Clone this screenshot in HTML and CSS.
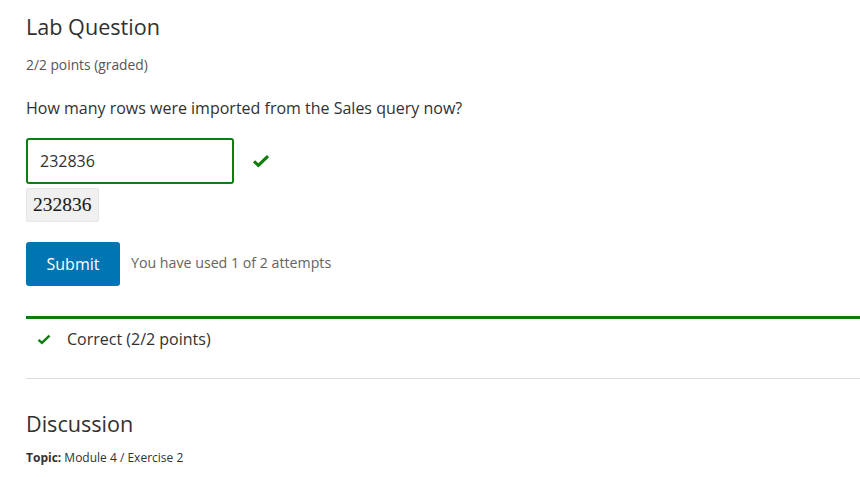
FILE: index.html
```html
<!DOCTYPE html>
<html>
<head>
<meta charset="utf-8">
<link rel="stylesheet" href="styles.css">
</head>
<body>
<div class="page">
  <h2 class="title">Lab Question</h2>
  <div class="points">2/2 points (graded)</div>
  <p class="question">How many rows were imported from the Sales query now?</p>
  <div class="answer-row">
    <div class="input">232836</div>
    <svg class="check big" viewBox="0 0 20 16" width="18" height="14"><path d="M2 8.5 L7 13 L18 2.5" fill="none" stroke="#0d7e0d" stroke-width="3.6" stroke-linecap="butt"/></svg>
  </div>
  <div class="preview">232836</div>
  <div class="actions">
    <button class="submit">Submit</button>
    <span class="attempts">You have used 1 of 2 attempts</span>
  </div>
  <div class="notice">
    <svg class="check small" viewBox="0 0 20 16" width="14" height="11"><path d="M2 8.5 L7 13 L18 2.5" fill="none" stroke="#0d7e0d" stroke-width="3.6"/></svg>
    <span class="notice-text">Correct (2/2 points)</span>
  </div>
  <h2 class="discussion">Discussion</h2>
  <div class="topic"><b>Topic:</b> Module 4 / Exercise 2</div>
</div>
</body>
</html>
```
FILE: styles.css
```css
html, body { margin: 0; padding: 0; background: #fff; }
body { font-family: "Open Sans", "DejaVu Sans", sans-serif; color: #313131; }
.page { padding-left: 26px; }
.title { margin: 0; padding-top: 12px; font-size: 21.6px; font-weight: 400; line-height: 30px; color: #313131; }
.points { margin-top: 14px; font-size: 13.8px; line-height: 18px; color: #555; }
.question { margin: 23px 0 0; font-size: 16px; line-height: 22px; color: #313131; }
.answer-row { display: flex; align-items: center; margin-top: 19px; }
.input { box-sizing: border-box; width: 208px; height: 46px; border: 2px solid #0e7e0e; border-radius: 3px; padding: 0 12px; font-size: 16px; line-height: 42px; color: #313131; }
.check.big { margin-left: 18px; }
.preview { display: inline-block; margin-top: 4px; background: #f0f0f0; border: 1px solid #e6e6e6; border-radius: 2px; padding: 0 6px; font-family: "Liberation Serif", "DejaVu Serif", serif; font-size: 19.5px; line-height: 32px; color: #1a1a1a; -webkit-text-stroke: 0.1px #1a1a1a; }
.actions { display: flex; align-items: center; margin-top: 20px; }
.submit { box-sizing: border-box; width: 94px; height: 44px; border: none; border-radius: 3px; background: #0075b4; color: #fff; font-family: "Open Sans", sans-serif; font-size: 16px; padding: 0; }
.attempts { margin-left: 11px; margin-top: -4px; font-size: 14.2px; color: #646464; }
.notice { display: flex; align-items: center; margin-top: 30px; border-top: 3px solid #0a7d0a; border-bottom: 1px solid #ddd; height: 63px; box-sizing: border-box; padding-bottom: 19px; }
.check.small { margin-left: 11px; }
.notice-text { margin-left: 16px; font-size: 16px; color: #313131; }
.discussion { margin: 0; padding-top: 30px; font-size: 21.6px; font-weight: 400; line-height: 30px; color: #313131; }
.topic { margin-top: 11px; font-size: 12px; line-height: 16px; color: #313131; }
.topic b { font-weight: 700; }
```
